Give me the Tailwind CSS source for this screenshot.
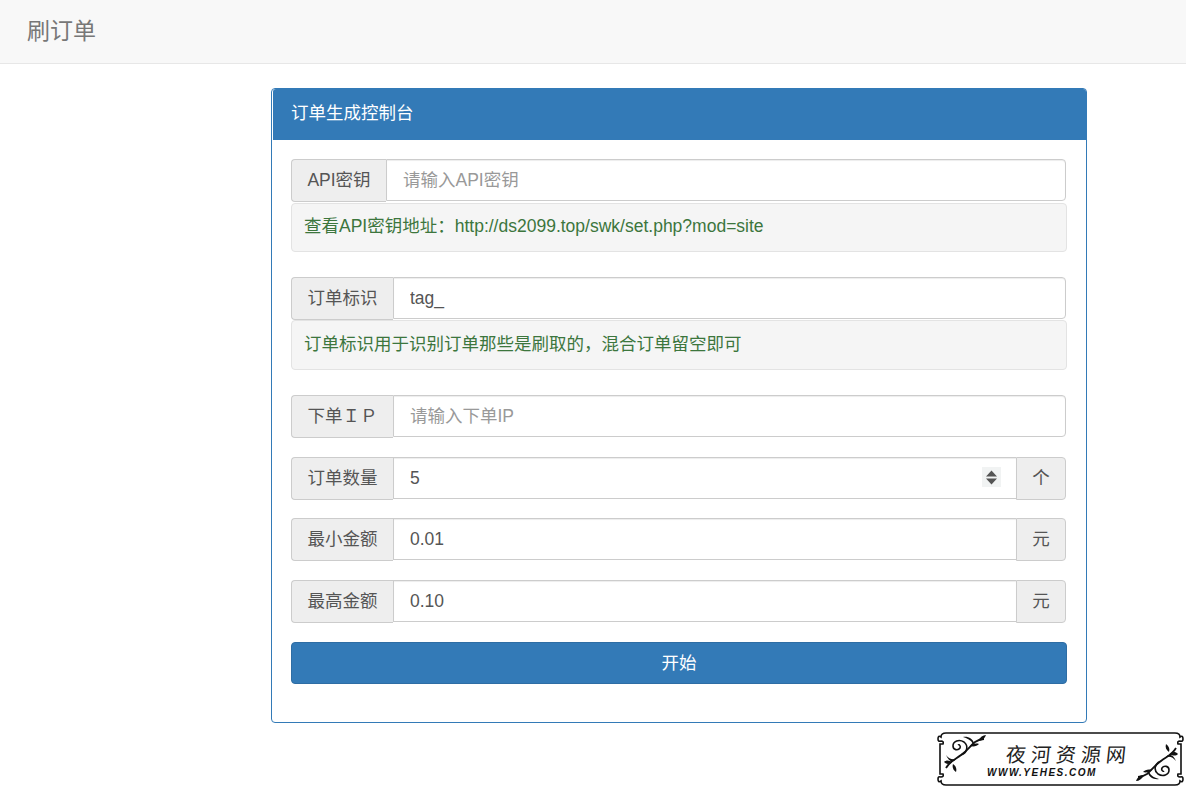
<!DOCTYPE html>
<html lang="zh-CN">
<head>
    <meta charset="UTF-8">
    <meta name="viewport" content="width=device-width, initial-scale=1.0">
    <title>刷订单</title>
    <script src="https://cdn.jsdelivr.net/npm/@tailwindcss/browser@4"></script>
</head>
<body class="relative h-[788px] overflow-hidden bg-white font-['Liberation_Sans','Noto_Sans_CJK_SC',sans-serif] text-[17.5px] text-[#333]">
    <!-- Navbar -->
    <nav class="flex h-[64px] items-center border-b border-[#e7e7e7] bg-[#f8f8f8] pl-[27px]">
        <span class="text-[23px] text-[#777]">刷订单</span>
    </nav>

    <!-- Panel -->
    <div class="ml-[271px] mt-[24px] h-[635px] w-[816px] rounded-[4px] border border-[#337ab7]">
        <div class="ml-px flex h-[51px] items-center rounded-tr-[3px] rounded-tl-[3px] bg-[#337ab7] pb-[2px] pl-[18px] text-white">订单生成控制台</div>
        <div class="pl-[19px] pr-[19px] pt-[19px]">
            <!-- API key -->
            <div class="flex h-[43px] w-[775px]">
                <span class="flex w-[95px] shrink-0 items-center justify-center rounded-l-[4px] border border-r-0 border-[#ccc] bg-[#eee] text-[#555]">API密钥</span>
                <input type="text" placeholder="请输入API密钥" class="h-[42px] min-w-0 flex-1 rounded-r-[4px] border border-[#ccc] bg-white px-[16px] text-[17.5px] text-[#555] shadow-[inset_0_1px_1px_rgba(0,0,0,.075)] placeholder:text-[#999]">
            </div>
            <div class="mt-px flex h-[49px] items-center rounded-[4px] border border-[#e3e3e3] bg-[#f5f5f5] pb-[2px] pl-[12px] text-[#3c763d]">查看API密钥地址：http://ds2099.top/swk/set.php?mod=site</div>

            <!-- Order tag -->
            <div class="mt-[25px] flex h-[43px] w-[775px]">
                <span class="flex w-[102px] shrink-0 items-center justify-center rounded-l-[4px] border border-r-0 border-[#ccc] bg-[#eee] text-[#555]">订单标识</span>
                <input type="text" value="tag_" class="h-[42px] min-w-0 flex-1 rounded-r-[4px] border border-[#ccc] bg-white px-[16px] text-[17.5px] text-[#555] shadow-[inset_0_1px_1px_rgba(0,0,0,.075)]">
            </div>
            <div class="flex h-[50px] items-center rounded-[4px] border border-[#e3e3e3] bg-[#f5f5f5] pb-[2px] pl-[12px] text-[#3c763d]">订单标识用于识别订单那些是刷取的，混合订单留空即可</div>

            <!-- Order IP -->
            <div class="mt-[25px] flex h-[43px] w-[775px]">
                <span class="flex w-[102px] shrink-0 items-center justify-center rounded-l-[4px] border border-r-0 border-[#ccc] bg-[#eee] text-[#555]">下单ＩＰ</span>
                <input type="text" placeholder="请输入下单IP" class="h-[42px] min-w-0 flex-1 rounded-r-[4px] border border-[#ccc] bg-white px-[16px] text-[17.5px] text-[#555] shadow-[inset_0_1px_1px_rgba(0,0,0,.075)] placeholder:text-[#999]">
            </div>

            <!-- Count -->
            <div class="mt-[19px] flex h-[43px] w-[775px]">
                <span class="flex w-[102px] shrink-0 items-center justify-center rounded-l-[4px] border border-r-0 border-[#ccc] bg-[#eee] text-[#555]">订单数量</span>
                <div class="relative h-[42px] min-w-0 flex-1">
                    <input type="text" value="5" class="h-full w-full border border-r-0 border-[#ccc] bg-white px-[16px] text-[17.5px] text-[#555] shadow-[inset_0_1px_1px_rgba(0,0,0,.075)]">
                    <span class="absolute right-[15px] top-[10px] flex h-[20px] w-[19px] items-center justify-center bg-[#f1f3f3]">
                        <svg width="13" height="15" viewBox="0 0 13 15"><path d="M6.5 0.5 L12 6.5 H1 Z M1 8.5 H12 L6.5 14.5 Z" fill="#555"/></svg>
                    </span>
                </div>
                <span class="flex w-[50px] shrink-0 items-center justify-center rounded-r-[4px] border border-[#ccc] bg-[#eee] text-[#555]">个</span>
            </div>

            <!-- Min amount -->
            <div class="mt-[18px] flex h-[43px] w-[775px]">
                <span class="flex w-[102px] shrink-0 items-center justify-center rounded-l-[4px] border border-r-0 border-[#ccc] bg-[#eee] text-[#555]">最小金额</span>
                <input type="text" value="0.01" class="h-[42px] min-w-0 flex-1 border border-r-0 border-[#ccc] bg-white px-[16px] text-[17.5px] text-[#555] shadow-[inset_0_1px_1px_rgba(0,0,0,.075)]">
                <span class="flex w-[50px] shrink-0 items-center justify-center rounded-r-[4px] border border-[#ccc] bg-[#eee] text-[#555]">元</span>
            </div>

            <!-- Max amount -->
            <div class="mt-[19px] flex h-[43px] w-[775px]">
                <span class="flex w-[102px] shrink-0 items-center justify-center rounded-l-[4px] border border-r-0 border-[#ccc] bg-[#eee] text-[#555]">最高金额</span>
                <input type="text" value="0.10" class="h-[42px] min-w-0 flex-1 border border-r-0 border-[#ccc] bg-white px-[16px] text-[17.5px] text-[#555] shadow-[inset_0_1px_1px_rgba(0,0,0,.075)]">
                <span class="flex w-[50px] shrink-0 items-center justify-center rounded-r-[4px] border border-[#ccc] bg-[#eee] text-[#555]">元</span>
            </div>

            <button class="mt-[19px] flex h-[42px] w-full items-center justify-center rounded-[4px] border border-[#2e6da4] bg-[#337ab7] text-[17.5px] text-white">开始</button>
        </div>
    </div>

    <!-- Watermark -->
    <div class="absolute left-[937px] top-[731px] h-[57px] w-[249px] bg-white">
        <svg class="absolute inset-0" width="249" height="57" viewBox="0 0 249 57" fill="none" stroke="#111">
            <!-- frame with hooked corners -->
            <path d="M9 2 H238 Q243 2 243 6 Q246 4 246 8 Q246 11 243 10 Q240 10 241 13 H244 V43 H241 Q240 46 243 46 Q246 45 246 48 Q246 52 243 50 Q243 54 238 54 H9 Q4 54 4 50 Q1 52 1 48 Q1 45 4 46 Q7 46 6 43 H3 V13 H6 Q7 10 4 10 Q1 11 1 8 Q1 4 4 6 Q4 2 9 2 Z" stroke-width="1.6"/>
            <g id="flourish">
                <path d="M9 37 C13 30 19 28 24 24 C30 20 33 15 38 11 C41 9 44 8 47 8" stroke-width="1.8"/>
                <path d="M24 24 C30 22 32 15 27 11 C22 8 16 10 16 15 C16 19 21 20 23 17 C24 15 22 13 21 14" stroke-width="1.6"/>
                <path d="M9 24 C12 28 15 29 19 28 C16 32 12 31 9 24 Z M16 33 C19 35 20 38 19 41 C16 39 15 36 16 33 Z M7 31 C10 34 13 33 15 31 C12 29 9 29 7 31 Z" fill="#111" stroke="none"/>
                <path d="M36 13 C34 9 30 7 26 6 C31 5 36 8 37 12 Z M41 10 C43 6 46 4 49 4 C48 7 45 10 41 10 Z M33 15 C37 16 40 15 42 13 C39 12 35 13 33 15 Z" fill="#111" stroke="none"/>
            </g>
            <g transform="translate(248 54) scale(-1 -1)">
                <path d="M9 37 C13 30 19 28 24 24 C30 20 33 15 38 11 C41 9 44 8 47 8" stroke-width="1.8"/>
                <path d="M24 24 C30 22 32 15 27 11 C22 8 16 10 16 15 C16 19 21 20 23 17 C24 15 22 13 21 14" stroke-width="1.6"/>
                <path d="M9 24 C12 28 15 29 19 28 C16 32 12 31 9 24 Z M16 33 C19 35 20 38 19 41 C16 39 15 36 16 33 Z M7 31 C10 34 13 33 15 31 C12 29 9 29 7 31 Z" fill="#111" stroke="none"/>
                <path d="M36 13 C34 9 30 7 26 6 C31 5 36 8 37 12 Z M41 10 C43 6 46 4 49 4 C48 7 45 10 41 10 Z M33 15 C37 16 40 15 42 13 C39 12 35 13 33 15 Z" fill="#111" stroke="none"/>
            </g>
        </svg>
        <span class="absolute left-[69px] top-[12px] skew-x-[-6deg] whitespace-nowrap text-[20px] leading-[24px] tracking-[5px] text-[#222]">夜河资源网</span>
        <span class="absolute left-[50px] top-[36px] whitespace-nowrap text-[10px] font-bold italic leading-[12px] tracking-[1.5px] text-[#111]">WWW.YEHES.COM</span>
    </div>
</body>
</html>
